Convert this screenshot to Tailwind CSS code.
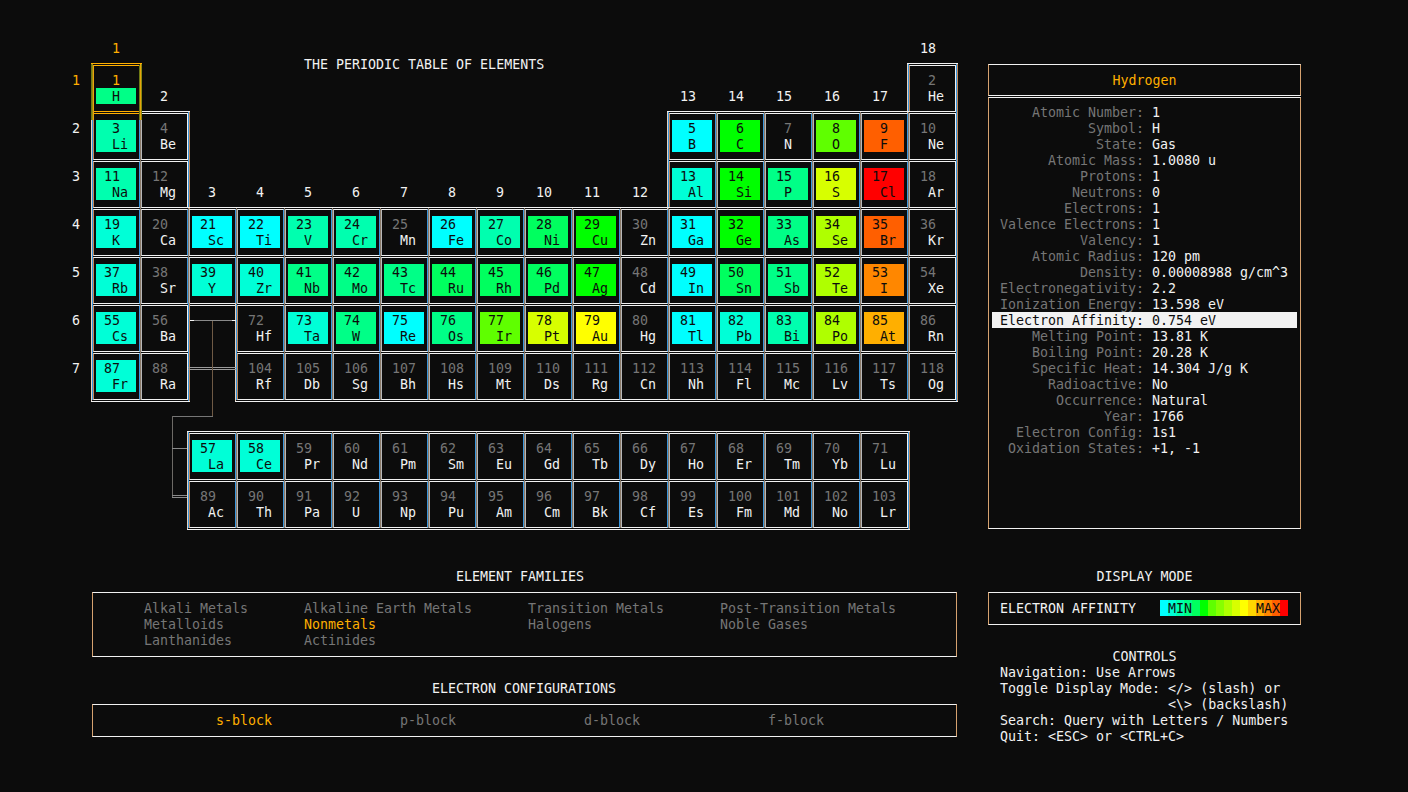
<!DOCTYPE html>
<html lang="en">

<head>
    <meta charset="UTF-8">
    <meta name="viewport" content="width=device-width, initial-scale=1.0">
    <script src="https://cdn.jsdelivr.net/npm/@tailwindcss/browser@4"></script>
    <title>Periodic Table TUI</title>
</head>

<body class="bg-[#0c0c0c]">
    <div class="relative flex w-[1408px] h-[792px] overflow-hidden pt-4 text-[#f2f2f2] text-[13.3px] leading-4 font-['DejaVu_Sans_Mono',monospace]">

        <!-- left side: table and legends -->
        <div class="w-[988px] shrink-0">
            <div id="table" class="grid grid-cols-[92px_repeat(18,48px)] grid-rows-[repeat(8,48px)]">
                <div class="col-start-2 col-span-12 row-start-1 row-span-2 pt-[41px] pl-[212px]">THE PERIODIC TABLE OF ELEMENTS</div>
            </div>
            <div id="series" class="grid grid-cols-[repeat(15,48px)] grid-rows-[repeat(2,48px)] ml-[188px] mt-8"></div>

            <div class="w-[856px] h-4 pt-px ml-[92px] mt-10 text-center">ELEMENT FAMILIES</div>
            <div class="w-[865px] h-[65px] ml-[92px] mt-2 pt-[7px] pl-[51px] border border-y-[#f2f2f2] border-x-[#d6a26f] grid grid-cols-[160px_224px_192px_180px] content-start text-[#767676] [&>div]:h-4 [&>div]:pt-px">
                <div>Alkali Metals</div>
                <div>Alkaline Earth Metals</div>
                <div>Transition Metals</div>
                <div>Post-Transition Metals</div>
                <div>Metalloids</div>
                <div class="text-[#ffaf00]">Nonmetals</div>
                <div>Halogens</div>
                <div>Noble Gases</div>
                <div>Lanthanides</div>
                <div>Actinides</div>
            </div>

            <div class="w-[864px] h-4 pt-px ml-[92px] mt-[23px] text-center">ELECTRON CONFIGURATIONS</div>
            <div class="w-[865px] h-[33px] ml-[92px] mt-2 pt-[7px] pl-[123px] border border-y-[#f2f2f2] border-x-[#d6a26f] grid grid-cols-[repeat(4,184px)] content-start text-[#767676] [&>div]:h-4 [&>div]:pt-px">
                <div class="text-[#ffaf00]">s-block</div>
                <div>p-block</div>
                <div>d-block</div>
                <div>f-block</div>
            </div>
        </div>

        <!-- right side: element details -->
        <div class="w-[313px] shrink-0 pt-12">
            <div class="h-8 pt-2 border border-y-[#f2f2f2] border-x-[#d6a26f] text-center text-[#ffaf00]">Hydrogen</div>
            <div id="details" class="h-[432px] mt-px pt-[6px] px-[3px] border border-y-[#f2f2f2] border-x-[#d6a26f]"></div>

            <div class="h-4 pt-px mt-[39px] text-center">DISPLAY MODE</div>
            <div class="h-[33px] mt-2 pt-[7px] pl-[11px] flex border border-y-[#f2f2f2] border-x-[#d6a26f]">
                <span class="w-[160px] pt-px">ELECTRON AFFINITY</span>
                <div id="scale" class="relative flex w-[128px] h-4"></div>
            </div>

            <div class="h-4 pt-px mt-[23px] text-center">CONTROLS</div>
            <div class="pl-3 [&>div]:h-4 [&>div]:pt-px [&>div]:whitespace-pre">
                <div>Navigation: Use Arrows</div>
                <div>Toggle Display Mode: &lt;/&gt; (slash) or</div>
                <div>                     &lt;\&gt; (backslash)</div>
                <div>Search: Query with Letters / Numbers</div>
                <div>Quit: &lt;ESC&gt; or &lt;CTRL+C&gt;</div>
            </div>
        </div>

        <!-- lines from the gap in the table down to the two series -->
        <svg class="absolute left-0 top-0" width="1408" height="792" shape-rendering="crispEdges">
            <rect x="190" y="320" width="46" height="1" fill="#8a8a8a" />
            <rect x="190" y="320" width="4" height="1" fill="#f2f2f2" />
            <rect x="232" y="320" width="4" height="1" fill="#f2f2f2" />
            <rect x="188" y="367" width="48" height="1" fill="#9a9a9a" />
            <rect x="188" y="369" width="48" height="1" fill="#9a9a9a" />
            <rect x="212" y="321" width="1" height="95" fill="#6f5a45" />
            <rect x="172" y="416" width="41" height="1" fill="#767676" />
            <rect x="172" y="416" width="1" height="82" fill="#6d6a66" />
            <rect x="172" y="448" width="15" height="1" fill="#8a8a8a" />
            <rect x="172" y="495" width="15" height="1" fill="#8a8a8a" />
            <rect x="172" y="497" width="15" height="1" fill="#8a8a8a" />
        </svg>
    </div>

    <script>
        const scale = ['#00ffff', '#00ffd7', '#00ffaf', '#00ff87', '#00ff5f', '#00ff00', '#5fff00', '#87ff00',
            '#afff00', '#d7ff00', '#ffff00', '#ffd700', '#ffaf00', '#ff8700', '#ff5f00', '#ff0000'];

        // [period, first group, first atomic number, symbols, index into scale (-1 = no data)]
        const segments = [
            [1, 1, 1, 'H', [3]],
            [1, 18, 2, 'He', [-1]],
            [2, 1, 3, 'Li Be', [2, -1]],
            [2, 13, 5, 'B C N O F Ne', [0, 5, -1, 6, 14, -1]],
            [3, 1, 11, 'Na Mg', [2, -1]],
            [3, 13, 13, 'Al Si P S Cl Ar', [1, 5, 3, 9, 15, -1]],
            [4, 1, 19, 'K Ca Sc Ti V Cr Mn Fe Co Ni Cu Zn Ga Ge As Se Br Kr', [1, -1, 0, 0, 2, 2, -1, 0, 2, 4, 5, -1, 0, 5, 3, 8, 14, -1]],
            [5, 1, 37, 'Rb Sr Y Zr Nb Mo Tc Ru Rh Pd Ag Cd In Sn Sb Te I Xe', [1, -1, 1, 1, 3, 3, 3, 4, 4, 4, 5, -1, 0, 4, 3, 8, 13, -1]],
            [6, 1, 55, 'Cs Ba', [1, -1]],
            [6, 4, 72, 'Hf Ta W Re Os Ir Pt Au Hg Tl Pb Bi Po At Rn', [-1, 1, 3, 0, 3, 6, 9, 10, -1, 0, 1, 2, 8, 12, -1]],
            [7, 1, 87, 'Fr Ra', [1, -1]],
            [7, 4, 104, 'Rf Db Sg Bh Hs Mt Ds Rg Cn Nh Fl Mc Lv Ts Og', []],
            [10, 1, 57, 'La Ce Pr Nd Pm Sm Eu Gd Tb Dy Ho Er Tm Yb Lu', [1, 1]],
            [11, 1, 89, 'Ac Th Pa U Np Pu Am Cm Bk Cf Es Fm Md No Lr', []],
        ];

        const elements = [];
        segments.forEach(([period, group, z, symbols, colors]) => {
            symbols.split(' ').forEach((symbol, i) => {
                const idx = colors[i] === undefined ? -1 : colors[i];
                elements.push({ period, group: group + i, z: z + i, symbol, color: idx < 0 ? null : scale[idx] });
            });
        });
        const taken = new Set(elements.map(e => e.period + ',' + e.group));
        const has = (p, g) => taken.has(p + ',' + g);
        const line = cls => `<span class="absolute ${cls}"></span>`;

        const cellHtml = (e) => {
            const left = !has(e.period, e.group - 1);
            const right = !has(e.period, e.group + 1);
            const top = !has(e.period - 1, e.group);
            const bottom = !has(e.period + 1, e.group);
            const selected = e.z === 1;
            const under = e.z === 3;

            let lines = '';
            if (selected) {
                lines += line('z-10 -top-px -left-px -right-[2px] h-px bg-[#ffaf00]');
                lines += line('z-10 -left-px top-0 -bottom-2 w-px bg-[#6f7a14]');
                lines += line('z-10 left-0 top-0 -bottom-2 w-px bg-[#9a8a12]');
                lines += line('z-10 left-px top-px -bottom-2 w-px bg-[#e8a40a]');
                lines += line('z-10 right-0 top-px -bottom-2 w-px bg-[#6f7a14]');
                lines += line('z-10 -right-px top-0 -bottom-2 w-px bg-[#e8a40a]');
                lines += line('z-10 -right-[2px] top-0 -bottom-2 w-px bg-[#8a8a12]');
            } else {
                lines += line(left ? 'left-0 top-0 bottom-0 w-px bg-[#3a96dd]' : 'left-0 top-0 bottom-0 w-px bg-[#8a7a68]');
                if (left) lines += line('-left-px -top-px -bottom-[2px] w-px bg-[#e6d2bf]');
                if (right) {
                    lines += line('-right-px -top-px -bottom-[2px] w-px bg-[#3a96dd]');
                    lines += line('-right-[2px] -top-px -bottom-[2px] w-px bg-[#c58a5a]');
                }
                if (top) lines += line('-top-px -left-px -right-[2px] h-px bg-[#f2f2f2]');
                if (bottom) lines += line('-bottom-[2px] -left-px -right-[2px] h-px bg-[#f2f2f2]');
            }

            let frame = 'border-y-[#f2f2f2]';
            if (selected) frame = 'border-y-[#ffaf00]';
            if (under) frame = 'border-t-[#ffaf00] border-b-[#f2f2f2]';
            const leftSide = selected ? 'border-l-[#e8a40a]' : left ? 'border-l-[#c58a5a]' : 'border-l-[#b8b8b8]';
            const rightSide = selected ? 'border-r-[#6f7a14]' : right ? 'border-r-[#f2f2f2]' : 'border-r-[#3a96dd]';

            const number = String(e.z).padStart(2, ' ');
            let body;
            if (selected) {
                body = `<div class="w-10 mx-0.5 mt-1.5">
                    <div class="h-4 pt-px pl-2 whitespace-pre text-[#ffaf00]">${number}</div>
                    <div class="h-4 pt-px pl-4 text-[#0c0c0c]" style="background:${e.color}">${e.symbol}</div>
                </div>`;
            } else if (e.color) {
                body = `<div class="w-10 h-8 mx-0.5 mt-1.5 text-[#0c0c0c]" style="background:${e.color}">
                    <div class="h-4 pt-px pl-2 whitespace-pre">${number}</div>
                    <div class="h-4 pt-px pl-4">${e.symbol}</div>
                </div>`;
            } else {
                body = `<div class="w-10 h-8 mx-0.5 mt-1.5">
                    <div class="h-4 pt-px pl-2 whitespace-pre text-[#767676]">${number}</div>
                    <div class="h-4 pt-px pl-4">${e.symbol}</div>
                </div>`;
            }

            const series = e.period > 9;
            const column = series ? e.group : e.group + 1;
            const row = series ? e.period - 9 : e.period + 1;
            return `<div class="relative w-12 h-12 pt-px pl-px" style="grid-column:${column};grid-row:${row}">
                ${lines}
                <div class="w-[47px] h-[47px] border ${frame} ${leftSide} ${rightSide}">${body}</div>
            </div>`;
        };

        const labelHtml = (text, column, row, orange) => `<div class="pt-[25px] pl-3 whitespace-pre ${orange ? 'text-[#ffaf00]' : ''}" style="grid-column:${column};grid-row:${row}">${text}</div>`;
        const periodHtml = (p) => `<div class="pt-[9px] pl-[72px] ${p === 1 ? 'text-[#ffaf00]' : ''}" style="grid-column:1;grid-row:${p + 1}">${p}</div>`;

        // group headings sit in the empty slot over each column
        const groupRows = { 1: 1, 2: 2, 13: 2, 14: 2, 15: 2, 16: 2, 17: 2, 18: 1 };
        let tableHtml = '';
        for (let g = 1; g <= 18; g++) {
            tableHtml += labelHtml(String(g).padStart(2, ' '), g + 1, groupRows[g] || 4, g === 1);
        }
        for (let p = 1; p <= 7; p++) tableHtml += periodHtml(p);
        tableHtml += elements.filter(e => e.period < 10).map(cellHtml).join('');
        document.getElementById('table').insertAdjacentHTML('beforeend', tableHtml);
        document.getElementById('series').innerHTML = elements.filter(e => e.period > 9).map(cellHtml).join('');

        const details = [
            ['Atomic Number', '1'], ['Symbol', 'H'], ['State', 'Gas'], ['Atomic Mass', '1.0080 u'],
            ['Protons', '1'], ['Neutrons', '0'], ['Electrons', '1'], ['Valence Electrons', '1'],
            ['Valency', '1'], ['Atomic Radius', '120 pm'], ['Density', '0.00008988 g/cm^3'],
            ['Electronegativity', '2.2'], ['Ionization Energy', '13.598 eV'], ['Electron Affinity', '0.754 eV'],
            ['Melting Point', '13.81 K'], ['Boiling Point', '20.28 K'], ['Specific Heat', '14.304 J/g K'],
            ['Radioactive', 'No'], ['Occurrence', 'Natural'], ['Year', '1766'],
            ['Electron Config', '1s1'], ['Oxidation States', '+1, -1'],
        ];
        document.getElementById('details').innerHTML = details.map(([label, value]) => {
            const active = label === 'Electron Affinity';
            return `<div class="flex h-4 pt-px ${active ? 'bg-[#f2f2f2] text-[#0c0c0c]' : ''}">
                <span class="w-[152px] text-right ${active ? '' : 'text-[#767676]'}">${label}:</span>
                <span class="ml-2">${value}</span>
            </div>`;
        }).join('');

        document.getElementById('scale').innerHTML = scale.map(c => `<span class="w-2 h-4" style="background:${c}"></span>`).join('')
            + '<span class="absolute left-2 top-px text-[#0c0c0c]">MIN</span><span class="absolute left-[96px] top-px text-[#0c0c0c]">MAX</span>';
    </script>
</body>

</html>
